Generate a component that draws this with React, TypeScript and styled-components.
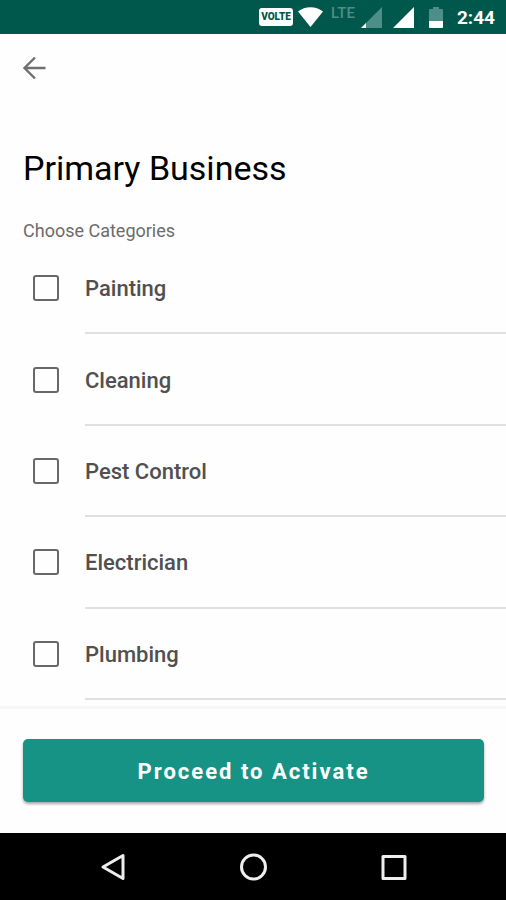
import React from "react";
import styled, { createGlobalStyle } from "styled-components";

const GlobalStyle = createGlobalStyle`
  * { box-sizing: border-box; }
  html, body { margin: 0; padding: 0; }
  body {
    font-family: Roboto, "Noto Sans", sans-serif;
    background: #fefefe;
    color: #000;
  }
`;

const Screen = styled.div`
  display: flex;
  flex-direction: column;
  min-height: 100vh;
`;

const StatusBar = styled.div`
  display: flex;
  align-items: center;
  justify-content: flex-end;
  height: 34px;
  padding-right: 11px;
  background: #00574b;
  color: #fff;
`;

const VolteBadge = styled.span`
  width: 34px;
  margin-right: 5px;
  border-radius: 3px;
  background: #fff;
  color: #00574b;
  font-size: 10px;
  font-weight: 900;
  line-height: 18px;
  text-align: center;
`;

const Network = styled.span`
  margin: 0 6px 8px 8px;
  color: #4d8f86;
  font-size: 15px;
  font-weight: 500;
  line-height: 16px;
`;

const StatusIcon = styled.svg<{ $gap: number }>`
  display: block;
  flex: none;
  margin-right: ${(p) => p.$gap}px;
`;

const Clock = styled.time`
  padding-top: 2px;
  font-size: 19px;
  font-weight: 700;
  line-height: 22px;
`;

const AppBar = styled.header`
  display: flex;
  align-items: center;
  height: 68px;
  padding: 0 17px;
`;

const BackButton = styled.button`
  display: flex;
  padding: 0;
  border: 0;
  background: none;
  color: #707070;
  cursor: pointer;
`;

const Content = styled.main`
  display: flex;
  flex: 1;
  flex-direction: column;
  padding: 44px 0 6px;
`;

const Title = styled.h1`
  margin: 0 23px;
  font-size: 34px;
  font-weight: 400;
  line-height: 44px;
`;

const Caption = styled.h2`
  margin: 0;
  padding: 29px 23px 0;
  color: #6c6c6c;
  font-size: 18px;
  font-weight: 400;
  line-height: 24px;
`;

const Categories = styled.div`
  display: flex;
  flex: 1;
  flex-direction: column;
`;

const Row = styled.label`
  display: flex;
  flex: 1;
  min-height: 64px;
  padding-left: 33px;
  cursor: pointer;
`;

const Checkbox = styled.input`
  appearance: none;
  flex: none;
  align-self: center;
  width: 26px;
  height: 26px;
  margin: 0 26px 1px 0;
  border: 2px solid #686868;
  border-radius: 3px;

  &:checked {
    border-color: #179385;
    background: #179385;
    box-shadow: inset 0 0 0 3px #fefefe;
  }
`;

const RowText = styled.span`
  display: flex;
  flex: 1;
  align-items: center;
  padding-top: 2px;
  border-bottom: 2px solid #e0e0e0;
  color: #505050;
  font-size: 22px;
  font-weight: 500;
`;

const Footer = styled.footer`
  padding: 30px 22px 31px 23px;
  border-top: 3px solid #f6f6f6;
`;

const PrimaryButton = styled.button`
  display: block;
  width: 100%;
  height: 63px;
  padding: 2px 0 0;
  border: 0;
  border-radius: 5px;
  background: #179385;
  box-shadow: 0 2px 3px rgba(0, 0, 0, 0.35);
  color: #fff;
  font: 700 22px/28px Roboto, "Noto Sans", sans-serif;
  letter-spacing: 2px;
  cursor: pointer;
`;

const NavBar = styled.nav`
  display: flex;
  align-items: center;
  justify-content: center;
  gap: 100px;
  height: 67px;
  background: #000;
`;

const NavButton = styled.button`
  display: flex;
  padding: 0;
  border: 0;
  background: none;
  cursor: pointer;
`;

const categories = ["Painting", "Cleaning", "Pest Control", "Electrician", "Plumbing"];

export default function App() {
  return (
    <>
      <GlobalStyle />
      <Screen>
        <StatusBar>
          <VolteBadge>VOLTE</VolteBadge>
          <StatusIcon $gap={0} width="25" height="20" viewBox="0 0 25 20" aria-hidden="true">
            <path d="M0 4.5C7-1.2 18-1.2 25 4.5L12.5 20Z" fill="#fff" />
          </StatusIcon>
          <Network>LTE</Network>
          <StatusIcon $gap={11} width="21" height="21" viewBox="0 0 21 21" aria-hidden="true">
            <path d="M21 0V21H0Z" fill="#4d8f86" />
            <path d="M5 16V21H0Z" fill="#fff" />
          </StatusIcon>
          <StatusIcon $gap={15} width="21" height="21" viewBox="0 0 21 21" aria-hidden="true">
            <path d="M21 0V21H0Z" fill="#fff" />
          </StatusIcon>
          <StatusIcon $gap={14} width="14" height="21" viewBox="0 0 14 21" aria-hidden="true">
            <path d="M4 0H10V2H13Q14 2 14 3V14H0V3Q0 2 1 2H4Z" fill="#4d8f86" />
            <path d="M0 14H14V20Q14 21 13 21H1Q0 21 0 20Z" fill="#fff" />
          </StatusIcon>
          <Clock>2:44</Clock>
        </StatusBar>
        <AppBar>
          <BackButton type="button" aria-label="Back">
            <svg width="34" height="34" viewBox="0 0 34 34" fill="none" stroke="currentColor" strokeWidth="2.4">
              <path d="M28.500 17H8M18 6.500L7.500 17L18 27.500" />
            </svg>
          </BackButton>
        </AppBar>
        <Content>
          <Title>Primary Business</Title>
          <Caption id="categories-caption">Choose Categories</Caption>
          <Categories role="group" aria-labelledby="categories-caption">
            {categories.map((name) => (
              <Row key={name}>
                <Checkbox type="checkbox" name="category" value={name} />
                <RowText>{name}</RowText>
              </Row>
            ))}
          </Categories>
        </Content>
        <Footer>
          <PrimaryButton type="button">Proceed to Activate</PrimaryButton>
        </Footer>
        <NavBar>
          <NavButton type="button" aria-label="Back">
            <svg width="40" height="40" viewBox="0 0 40 40" fill="none" stroke="#eee" strokeWidth="3" strokeLinejoin="round">
              <path d="M30 8.500V31.500L10 20Z" />
            </svg>
          </NavButton>
          <NavButton type="button" aria-label="Home">
            <svg width="40" height="40" viewBox="0 0 40 40" fill="none" stroke="#eee" strokeWidth="3">
              <circle cx="20.5" cy="20" r="12" />
            </svg>
          </NavButton>
          <NavButton type="button" aria-label="Recent apps">
            <svg width="40" height="40" viewBox="0 0 40 40" fill="none" stroke="#eee" strokeWidth="3" strokeLinejoin="round">
              <rect x="10" y="9.500" width="22" height="22" />
            </svg>
          </NavButton>
        </NavBar>
      </Screen>
    </>
  );
}
